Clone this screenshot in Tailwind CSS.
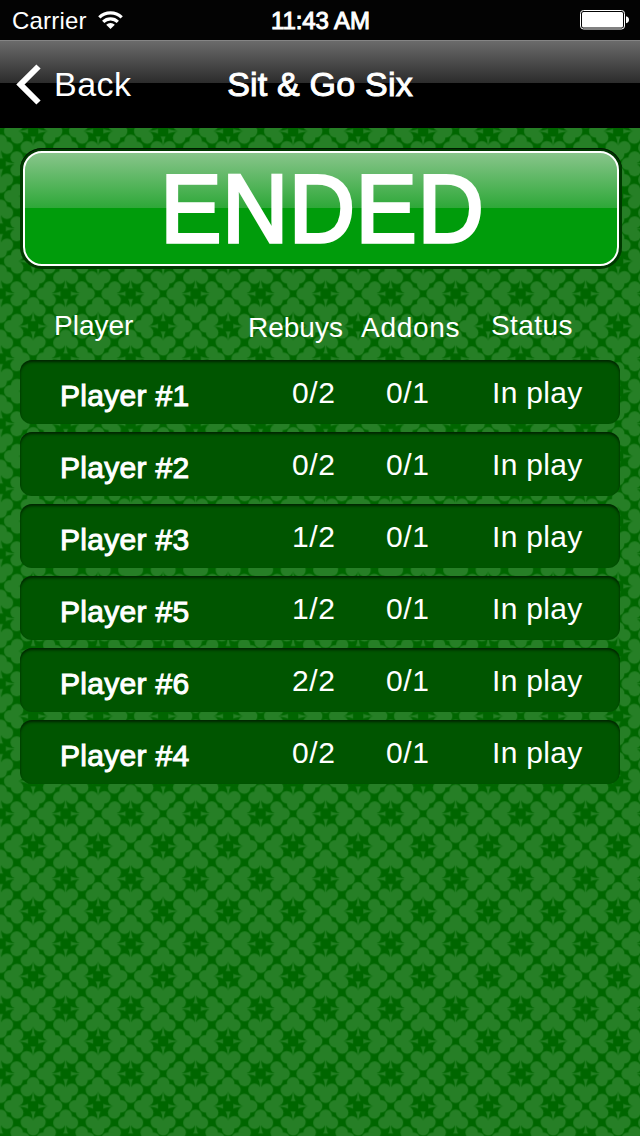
<!DOCTYPE html>
<html lang="en">
<head>
    <meta charset="UTF-8">
    <meta name="viewport" content="width=device-width, initial-scale=1.0">
    <title>Sit &amp; Go Six</title>
    <script src="https://cdn.jsdelivr.net/npm/@tailwindcss/browser@4"></script>
    <style>
        body { font-family: 'Liberation Sans', Arial, sans-serif; }
        .medium { -webkit-text-stroke: 1px #fff; }
        .heavy { -webkit-text-stroke: 3.4px #fff; }
    </style>
</head>
<body class="relative isolate w-[640px] h-[1136px] overflow-hidden bg-[#006600] text-white">
    <!-- Clubs pattern -->
    <svg class="absolute inset-0 -z-10" width="640" height="1136">
        <defs>
            <g id="club">
                <circle cx="0" cy="-23" r="6.2"/>
                <circle cx="-6.3" cy="-16" r="6.2"/>
                <circle cx="6.3" cy="-16" r="6.2"/>
                <path d="M-2-20h4l-1.500 6.500q.4 6 2 8.300h-5q1.600-2.300 2-8.300z"/>
            </g>
            <g id="star">
                <use href="#club"/>
                <use href="#club" transform="rotate(90)"/>
                <use href="#club" transform="rotate(180)"/>
                <use href="#club" transform="rotate(270)"/>
            </g>
            <pattern id="felt" width="65" height="65" patternUnits="userSpaceOnUse" patternTransform="translate(33.2 1.300)">
                <g fill="#267f26">
                    <use href="#star"/>
                    <use href="#star" x="65"/>
                    <use href="#star" y="65"/>
                    <use href="#star" x="65" y="65"/>
                    <use href="#star" x="32.5" y="32.5"/>
                </g>
            </pattern>
        </defs>
        <rect width="640" height="1136" fill="url(#felt)"/>
    </svg>

    <!-- Status bar -->
    <div class="grid grid-cols-3 items-center h-10 bg-[#030303] pl-3 pr-[11px] text-[24px] leading-none">
        <div class="flex items-center">
            <span class="pt-[2px] tracking-[0.2px]">Carrier</span>
            <svg class="ml-[11px]" width="25" height="20" viewBox="0 0 25 20" fill="none" stroke="#fff" stroke-width="3.2">
                <path d="M1.3 7.4a16 16 0 0 1 22.4 0"/>
                <path d="M5.2 11.8a10.4 10.4 0 0 1 14.6 0"/>
                <path d="M8.2 14.7a6.2 6.2 0 0 1 8.600 0L12.5 19z" fill="#fff" stroke="none"/>
            </svg>
        </div>
        <div class="medium pt-[2px] text-center tracking-[-0.1px]">11:43 AM</div>
        <svg class="justify-self-end" width="49" height="20" viewBox="0 0 49 20">
            <rect x=".5" y=".5" width="44" height="18.5" rx="3" fill="none" stroke="#fff"/>
            <rect x="2" y="2" width="41" height="15.5" rx="1.5" fill="#fff"/>
            <path d="M46 6.3c2 .3 3 1.6 3 3.5s-1 3.2-3 3.5z" fill="#fff"/>
        </svg>
    </div>

    <!-- Navigation bar -->
    <header class="grid grid-cols-[213px_214px_213px] items-center h-[88px] border-t border-[#858585] bg-[linear-gradient(#6b6b6b_0,#2c2c2c_42px,#000_42px)] text-[34px] leading-none">
        <a href="#" class="flex items-center pl-4">
            <svg width="25" height="42" viewBox="0 0 25 42" fill="none" stroke="#fff" stroke-width="6">
                <path d="M22.5 2.500L4.500 20.500l18 18"/>
            </svg>
            <span class="ml-[13px] pb-[2px] tracking-[0.5px]">Back</span>
        </a>
        <h1 class="medium pb-[2px] text-center whitespace-nowrap tracking-[0.2px]">Sit &amp; Go Six</h1>
    </header>

    <main class="px-5 pt-5">
        <div class="w-[602px] h-[121px] rounded-[22px] bg-[#003800] p-[3px] shadow-[inset_0_1px_0_#001800]">
            <button class="flex items-center justify-center w-full h-full rounded-[19px] border-2 border-white bg-[linear-gradient(#88c58b_0,#2ea838_55px,#009c0b_55px)]">
                <span class="heavy pl-[3px] text-[96px] leading-none tracking-[1px] scale-x-[0.95]">ENDED</span>
            </button>
        </div>

        <div class="grid grid-cols-[194px_113px_130px_1fr] mt-[43px] h-[48px] pl-[34px] text-[28px] leading-[28px]">
            <div>Player</div>
            <div class="pt-[2px]">Rebuys</div>
            <div class="pt-[2px] tracking-[0.7px]">Addons</div>
            <div class="tracking-[0.4px]">Status</div>
        </div>

        <div id="players" class="flex flex-col gap-2"></div>
    </main>

    <script>
    const players = [
        { name: 'Player #1', rebuys: '0/2' },
        { name: 'Player #2', rebuys: '0/2' },
        { name: 'Player #3', rebuys: '1/2' },
        { name: 'Player #5', rebuys: '1/2' },
        { name: 'Player #6', rebuys: '2/2' },
        { name: 'Player #4', rebuys: '0/2' }
    ];
    const list = document.getElementById('players');
    players.forEach(player => {
        const row = document.createElement('div');
        row.className = 'grid grid-cols-[231px_94px_107px_1fr] h-16 rounded-[12px] bg-[#005500] pl-10 pt-[18px] text-[30px] leading-[30px] shadow-[inset_0_2px_3px_rgba(0,0,0,0.6)]';
        row.innerHTML = `
            <div class="medium pt-[3px] tracking-[0.3px]">${player.name}</div>
            <div class="pl-px tracking-[0.6px]">${player.rebuys}</div>
            <div class="pl-px tracking-[0.6px]">0/1</div>
            <div class="tracking-[0.3px]">In play</div>
        `;
        list.appendChild(row);
    });
    </script>
</body>
</html>
